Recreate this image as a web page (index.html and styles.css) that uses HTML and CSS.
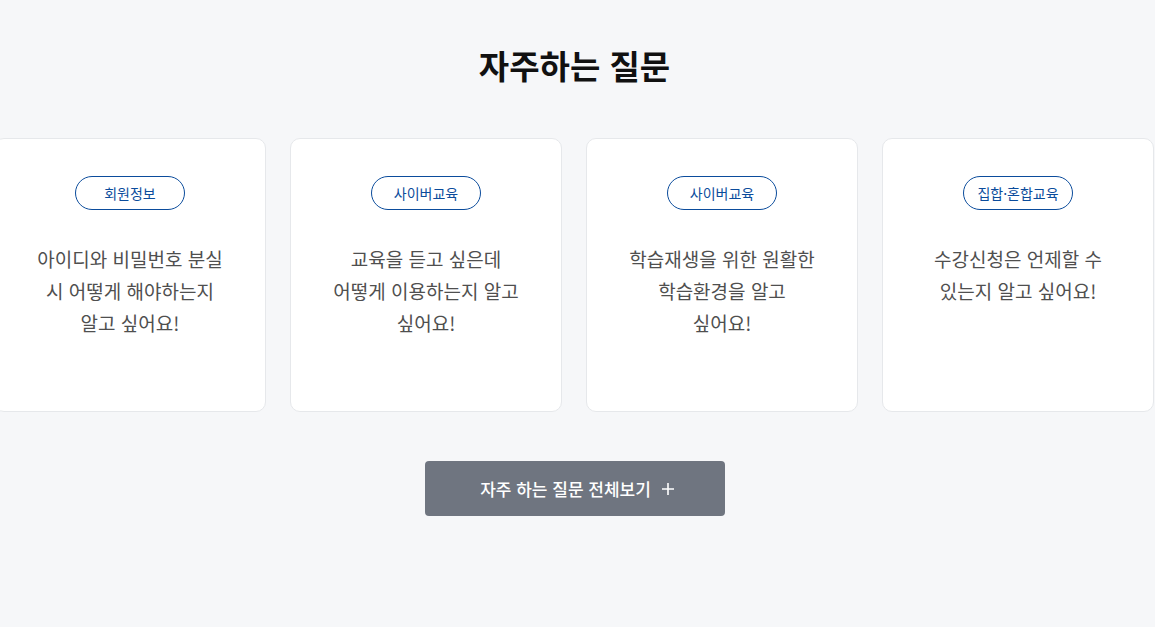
FILE: index.html
```html
<!DOCTYPE html>
<html lang="ko">
<head>
<meta charset="utf-8">
<title>자주하는 질문</title>
<link rel="stylesheet" href="styles.css">
</head>
<body>
<section class="faq">
  <h2 class="faq-title">자주하는 질문</h2>
  <div class="faq-viewport">
    <ul class="faq-track">
      <li class="faq-card">
        <span class="faq-badge">회원정보</span>
        <p class="faq-q">아이디와 비밀번호 분실 시 어떻게 해야하는지 알고 싶어요!</p>
      </li>
      <li class="faq-card">
        <span class="faq-badge">사이버교육</span>
        <p class="faq-q">교육을 듣고 싶은데 어떻게 이용하는지 알고 싶어요!</p>
      </li>
      <li class="faq-card">
        <span class="faq-badge">사이버교육</span>
        <p class="faq-q">학습재생을 위한 원활한 학습환경을 알고 싶어요!</p>
      </li>
      <li class="faq-card">
        <span class="faq-badge">집합·혼합교육</span>
        <p class="faq-q">수강신청은 언제할 수 있는지 알고 싶어요!</p>
      </li>
    </ul>
  </div>
  <div class="faq-more-wrap">
    <a class="faq-more" href="#">자주 하는 질문 전체보기
      <svg class="plus" width="14" height="14" viewBox="0 0 14 14" aria-hidden="true"><path d="M7 1v12M1 7h12" stroke="#fff" stroke-width="1.6" fill="none"/></svg>
    </a>
  </div>
</section>
</body>
</html>
```
FILE: styles.css
```css
* { box-sizing: border-box; }
html, body { margin: 0; padding: 0; }
body {
  background: #f6f7f9;
  font-family: "Noto Sans CJK KR", "Noto Sans", sans-serif;
  color: #333;
  overflow: hidden;
}
.faq { padding-top: 40px; height: 627px; width: calc(100% - 6px); }
.faq-title {
  margin: 0;
  text-align: center;
  font-size: 33px;
  font-weight: 700;
  line-height: 50px;
  color: #111;
}
.faq-viewport { overflow: hidden; margin-top: 48px; width: 1155px; }
.faq-track {
  list-style: none;
  margin: 0 0 0 -6px;
  padding: 0;
  display: flex;
  gap: 24px;
  width: 1162px;
}
.faq-card {
  flex: 0 0 272px;
  height: 274px;
  background: #fff;
  border: 1px solid #e6e8eb;
  border-radius: 10px;
  display: flex;
  flex-direction: column;
  align-items: center;
  padding: 37px 0 0;
}
.faq-badge {
  display: inline-flex;
  align-items: center;
  justify-content: center;
  min-width: 110px;
  height: 34px;
  padding: 0 8px;
  border: 1px solid #0b4c9c;
  border-radius: 17px;
  color: #0b4c9c;
  font-size: 14px;
}
.faq-q {
  margin: 33px 0 0;
  width: 188px;
  text-align: center;
  font-size: 19px;
  line-height: 32px;
  color: #4f4f4f;
  word-break: keep-all;
}
.faq-more-wrap { display: flex; justify-content: center; margin-top: 49px; }
.faq-more {
  display: inline-flex;
  align-items: center;
  justify-content: center;
  gap: 10px;
  width: 300px;
  height: 55px;
  background: #6f7580;
  border-radius: 4px;
  color: #fff;
  text-decoration: none;
  font-size: 17px;
  font-weight: 500;
  padding-left: 6px;
}
```
